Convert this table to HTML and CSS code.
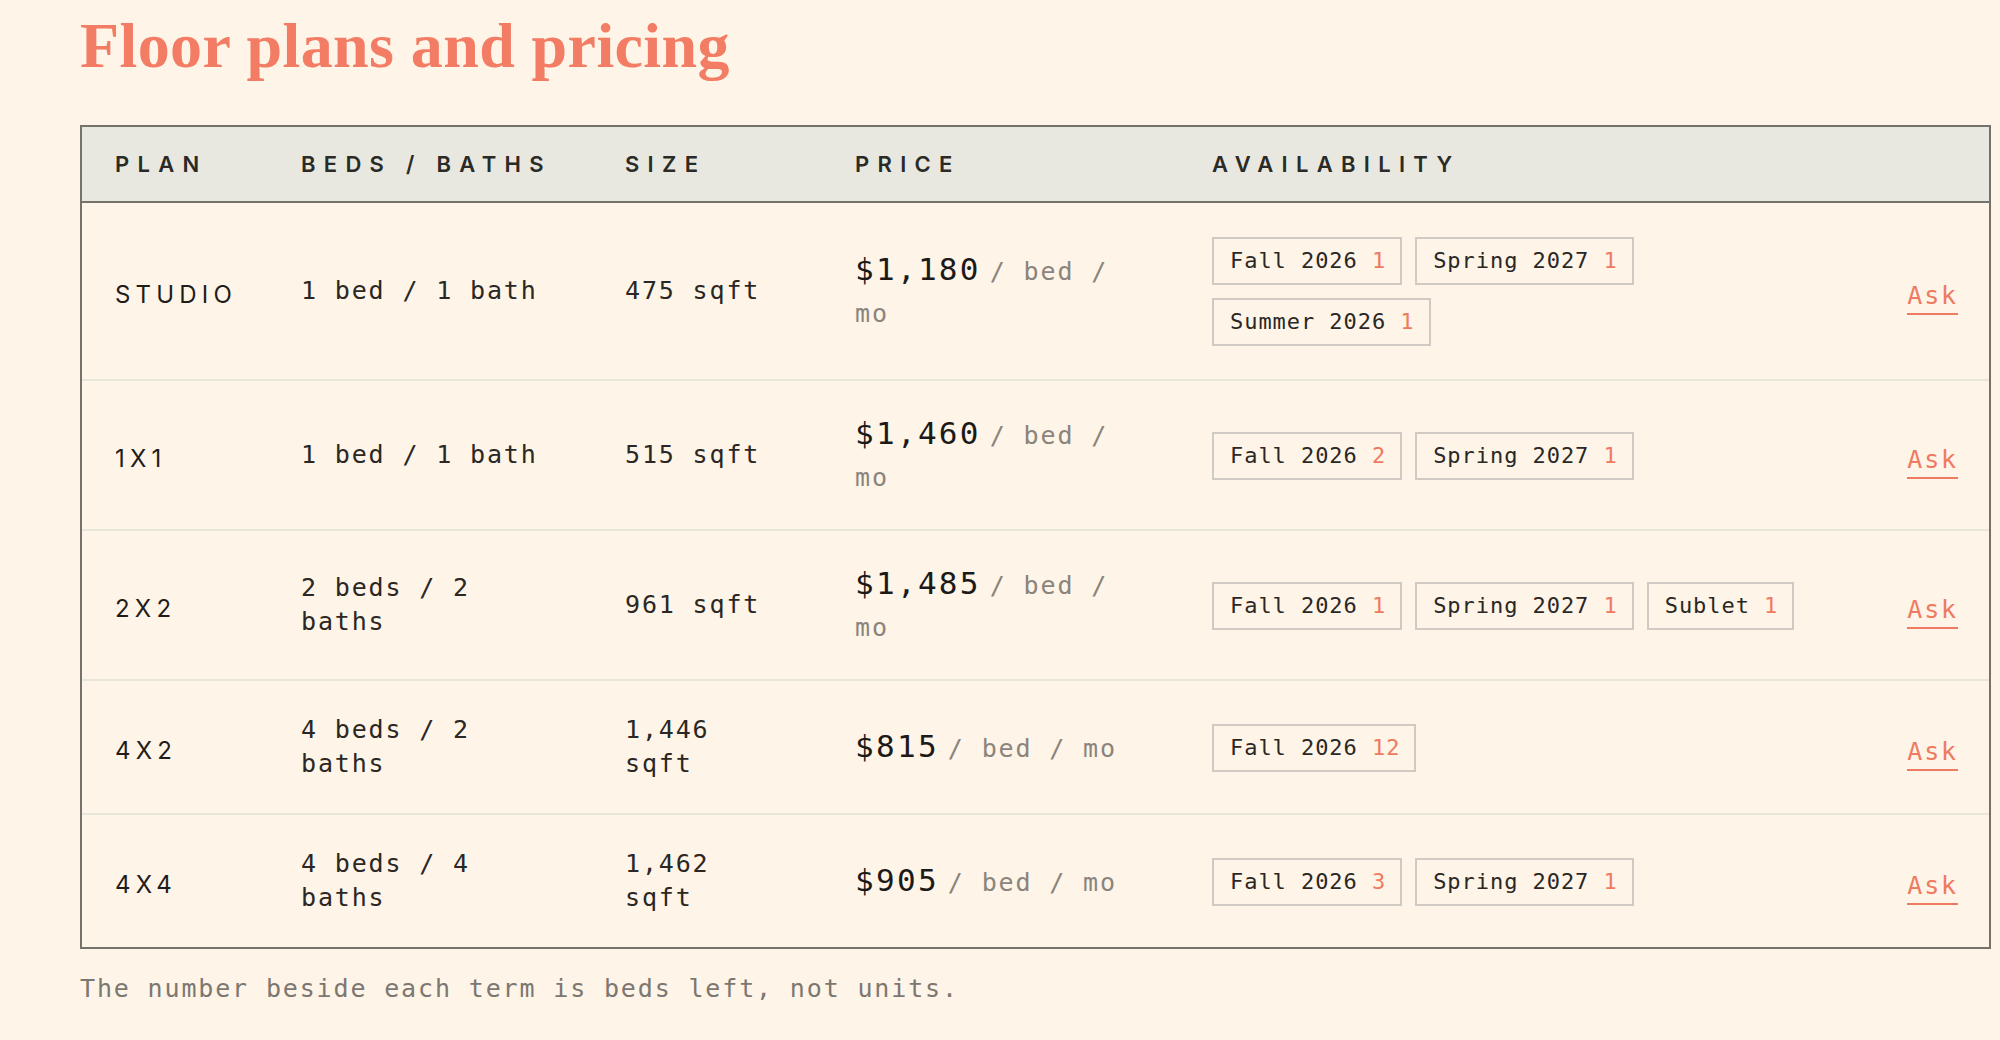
FILE: index.html
```html
<!DOCTYPE html>
<html lang="en">
<head>
<meta charset="utf-8">
<title>Floor plans and pricing</title>
<link rel="stylesheet" href="styles.css">
</head>
<body>
<main class="page">
  <h1 class="title">Floor plans and pricing</h1>
  <table class="plans">
    <colgroup>
      <col class="c-plan"><col class="c-beds"><col class="c-size"><col class="c-price"><col class="c-avail"><col class="c-ask">
    </colgroup>
    <thead>
      <tr>
        <th>Plan</th><th>Beds / Baths</th><th>Size</th><th>Price</th><th>Availability</th><th></th>
      </tr>
    </thead>
    <tbody>
      <tr>
        <td class="plan">Studio</td>
        <td>1 bed / 1 bath</td>
        <td>475 sqft</td>
        <td class="price"><span class="amt">$1,180</span><span class="per">/ bed / mo</span></td>
        <td class="avail"><div class="tags"><span class="tag">Fall 2026 <b>1</b></span><span class="tag">Spring 2027 <b>1</b></span><span class="tag">Summer 2026 <b>1</b></span></div></td>
        <td class="ask"><a href="#">Ask</a></td>
      </tr>
      <tr>
        <td class="plan">1x1</td>
        <td>1 bed / 1 bath</td>
        <td>515 sqft</td>
        <td class="price"><span class="amt">$1,460</span><span class="per">/ bed / mo</span></td>
        <td class="avail"><div class="tags"><span class="tag">Fall 2026 <b>2</b></span><span class="tag">Spring 2027 <b>1</b></span></div></td>
        <td class="ask"><a href="#">Ask</a></td>
      </tr>
      <tr>
        <td class="plan">2x2</td>
        <td>2 beds / 2 baths</td>
        <td>961 sqft</td>
        <td class="price"><span class="amt">$1,485</span><span class="per">/ bed / mo</span></td>
        <td class="avail"><div class="tags"><span class="tag">Fall 2026 <b>1</b></span><span class="tag">Spring 2027 <b>1</b></span><span class="tag">Sublet <b>1</b></span></div></td>
        <td class="ask"><a href="#">Ask</a></td>
      </tr>
      <tr>
        <td class="plan">4x2</td>
        <td>4 beds / 2 baths</td>
        <td>1,446 sqft</td>
        <td class="price"><span class="amt">$815</span><span class="per">/ bed / mo</span></td>
        <td class="avail"><div class="tags"><span class="tag">Fall 2026 <b>12</b></span></div></td>
        <td class="ask"><a href="#">Ask</a></td>
      </tr>
      <tr>
        <td class="plan">4x4</td>
        <td>4 beds / 4 baths</td>
        <td>1,462 sqft</td>
        <td class="price"><span class="amt">$905</span><span class="per">/ bed / mo</span></td>
        <td class="avail"><div class="tags"><span class="tag">Fall 2026 <b>3</b></span><span class="tag">Spring 2027 <b>1</b></span></div></td>
        <td class="ask"><a href="#">Ask</a></td>
      </tr>
    </tbody>
  </table>
  <p class="note">The number beside each term is beds left, not units.</p>
</main>
</body>
</html>
```

FILE: styles.css
```css
html, body {
  margin: 0;
  padding: 0;
  background: #fef4e7;
}

body {
  font-family: "DejaVu Sans Mono", monospace;
  color: #2a2724;
}

.page {
  padding: 10px 9px 0 80px;
}

.title {
  margin: 0 0 43px 0;
  font-family: "Liberation Serif", "Times New Roman", serif;
  font-weight: 700;
  font-size: 64px;
  line-height: 72px;
  color: #f37c64;
  letter-spacing: 0.4px;
}

.plans {
  width: 100%;
  table-layout: fixed;
  border-collapse: separate;
  border-spacing: 0;
  border: 2px solid #75716b;
}

.c-plan { width: 186px; }
.c-beds { width: 324px; }
.c-size { width: 230px; }
.c-price { width: 357px; }
.c-ask { width: 115px; }

.plans th {
  height: 74px;
  padding: 0 33px;
  background: #e8e8e1;
  border-bottom: 2px solid #75716b;
  text-align: left;
  font-family: Inter, "Noto Sans", sans-serif;
  font-weight: 600;
  font-size: 22px;
  letter-spacing: 8.3px;
  text-transform: uppercase;
  color: #2a2a26;
  vertical-align: middle;
}

.plans td {
  padding: 32px 33px;
  vertical-align: middle;
  font-size: 25px;
  line-height: 34px;
  letter-spacing: 1.85px;
  color: #2a2724;
}

.plans tbody tr + tr td {
  border-top: 2px solid #e8e5db;
}

.plans td.plan {
  padding-top: 36px;
  padding-bottom: 28px;
  font-family: Inter, "Noto Sans", sans-serif;
  font-size: 24px;
  letter-spacing: 5.2px;
  text-transform: uppercase;
  color: #1f1d1b;
}

.plans td.price {
  line-height: 42px;
  padding-top: 34px;
  padding-bottom: 30px;
  padding-right: 30px;
}

.plans td.avail {
  padding-top: 34px;
  padding-bottom: 33px;
}

.amt {
  font-size: 31px;
  line-height: 30px;
  letter-spacing: 2.3px;
  color: #1c1a18;
}

.per {
  margin-left: 9px;
  line-height: 30px;
  color: #8a847d;
}

.tags {
  display: flex;
  flex-wrap: wrap;
  gap: 13px;
}

.tag {
  display: inline-block;
  border: 2px solid #cfcac3;
  padding: 7px 14px 7px 16px;
  font-size: 22px;
  line-height: 30px;
  letter-spacing: 0.95px;
  color: #2a2724;
  white-space: nowrap;
}

.tag b {
  font-weight: 400;
  color: #ef7a61;
}

.plans td.ask {
  text-align: right;
  padding-right: 31px;
  padding-left: 0;
  padding-top: 38px;
  padding-bottom: 26px;
}

.ask a {
  display: inline-block;
  color: #ee7a62;
  text-decoration: none;
  border-bottom: 2px solid #ee7a62;
  line-height: 28px;
  padding-bottom: 3px;
  letter-spacing: 1.85px;
}

.note {
  margin: 23px 0 0 0;
  font-size: 25px;
  line-height: 34px;
  letter-spacing: 1.85px;
  color: #7c7770;
}
```
